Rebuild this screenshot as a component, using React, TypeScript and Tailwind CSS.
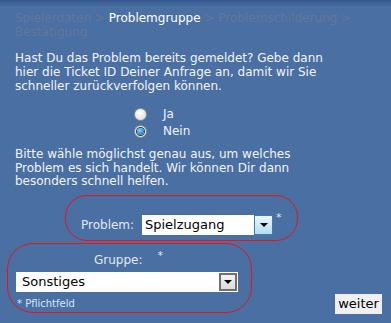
import React from "react";

function Radio({ checked }: { checked?: boolean }) {
  return (
    <span className="w-[13px] h-[13px] rounded-full border border-[#8e8f8f] bg-[radial-gradient(circle_at_40%_35%,#ffffff,#d6d6d6)] flex items-center justify-center">
      {checked && (
        <span className="w-[7px] h-[7px] rounded-full bg-[radial-gradient(circle_at_40%_35%,#7fd0ff,#0b5f9a)] ring-1 ring-[#1c3d57]" />
      )}
    </span>
  );
}

function Arrow() {
  return (
    <span className="w-0 h-0 border-l-[4px] border-r-[4px] border-t-[4px] border-l-transparent border-r-transparent border-t-black" />
  );
}

export default function App() {
  return (
    <div className="w-[391px] h-[323px] overflow-hidden bg-[#4a6fa3] bg-[linear-gradient(to_bottom,#33578c_0px,#4a6fa3_7px,#4a6fa3_100%)] font-['DejaVu_Sans',Verdana,sans-serif] text-[12px] leading-[14px] text-[#f2f4f8]">
      {/* breadcrumb */}
      <div className="px-[15px] pt-[11px] whitespace-nowrap">
        <div>
          <span className="text-[#62779a]">Spielerdaten &gt; </span>
          <span className="text-white">Problemgruppe</span>
          <span className="text-[#62779a]"> &gt; Problemschilderung &gt;</span>
        </div>
        <div className="text-[#62779a]">Bestätigung</div>
      </div>

      <div className="px-[15px] pt-[12px] whitespace-nowrap">
        <div>Hast Du das Problem bereits gemeldet? Gebe dann</div>
        <div>hier die Ticket ID Deiner Anfrage an, damit wir Sie</div>
        <div>schneller zurückverfolgen können.</div>
      </div>

      <div className="pl-[134px] pt-[14px] flex flex-col gap-[3px]">
        <label className="flex items-center h-[14px]">
          <Radio />
          <span className="ml-[16px]">Ja</span>
        </label>
        <label className="flex items-center h-[14px]">
          <Radio checked />
          <span className="ml-[16px]">Nein</span>
        </label>
      </div>

      <div className="px-[15px] pt-[10px] whitespace-nowrap leading-[13.5px]">
        <div>Bitte wähle möglichst genau aus, um welches</div>
        <div>Problem es sich handelt. Wir können Dir dann</div>
        <div>besonders schnell helfen.</div>
      </div>

      {/* Problem */}
      <div className="ml-[65px] mt-[6px] w-[233px] h-[46px] rounded-[22px] border border-[#e3161c] flex items-start pt-[19px] pl-[15px]">
        <span className="text-[#e4e9f1] mt-[3px] w-[61px]">Problem:</span>
        <div className="w-[131px] h-[20px] bg-white flex items-center justify-between text-[13px] text-black">
          <span className="pl-[3px]">Spielzugang</span>
          <span className="w-[19px] h-[20px] border border-[#3d7bb0] bg-[linear-gradient(to_bottom,#eaf6fd,#b2dbf3)] flex items-center justify-center">
            <Arrow />
          </span>
        </div>
        <span className="text-[11px] leading-[11px] -mt-[3px] ml-[3px] text-[#dfe6f0]">*</span>
      </div>

      {/* Gruppe + weiter */}
      <div className="flex items-start">
        <div className="ml-[7px] mt-[2px] w-[245px] h-[70px] rounded-[26px] border border-[#e3161c] pt-[9px] pl-[8px]">
          <div className="flex">
            <span className="ml-[78px] text-[#e4e9f1]">Gruppe:</span>
            <span className="ml-[15px] -mt-[4px] text-[11px] text-[#dfe6f0]">*</span>
          </div>
          <div className="mt-[5px] w-[222px] h-[20px] bg-white flex items-center justify-between text-[13px] text-black">
            <span className="pl-[6px]">Sonstiges</span>
            <span className="w-[18px] h-[18px] mr-[1px] border-2 border-[#707070] bg-[linear-gradient(to_bottom,#f4f4f4,#dcdcdc)] flex items-center justify-center">
              <Arrow />
            </span>
          </div>
          <div className="mt-[6px] ml-[1px] text-[10px] leading-[12px] text-[#d8e6f6]">* Pflichtfeld</div>
        </div>
        <button className="ml-auto mr-[9px] mt-[53px] w-[47px] h-[20px] bg-[#f0f0f0] text-black text-[13px] leading-[20px]">
          weiter
        </button>
      </div>
    </div>
  );
}
